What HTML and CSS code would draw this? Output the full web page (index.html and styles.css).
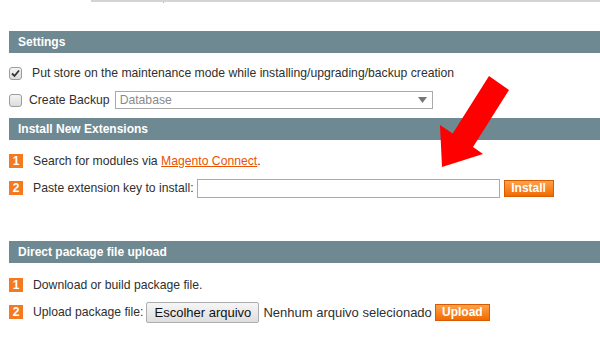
FILE: index.html
```html
<!DOCTYPE html>
<html lang="en">
<head>
    <meta charset="UTF-8">
    <title>Magento Connect Manager</title>
    <link rel="stylesheet" href="styles.css">
</head>
<body>
    <div class="tab-strip"><div class="tab"></div></div>

    <div class="page">
        <div class="section-head">Settings</div>
        <div class="section-body settings">
            <div class="row">
                <input type="checkbox" class="check" checked>
                <label class="check-label">Put store on the maintenance mode while installing/upgrading/backup creation</label>
            </div>
            <div class="row">
                <input type="checkbox" class="check">
                <label class="check-label tight">Create Backup</label>
                <select class="backup-type">
                    <option>Database</option>
                </select>
            </div>
        </div>

        <div class="section-head">Install New Extensions</div>
        <div class="section-body install">
            <div class="row">
                <span class="step">1</span>
                <span>Search for modules via <a href="#" class="link">Magento Connect</a>.</span>
            </div>
            <div class="row">
                <span class="step">2</span>
                <span>Paste extension key to install:</span>
                <input type="text" class="key-input">
                <button class="orange-btn install-btn">Install</button>
            </div>
        </div>

        <div class="section-head">Direct package file upload</div>
        <div class="section-body upload">
            <div class="row">
                <span class="step">1</span>
                <span>Download or build package file.</span>
            </div>
            <div class="row">
                <span class="step">2</span>
                <span>Upload package file:</span>
                <button class="file-btn">Escolher arquivo</button>
                <span class="file-name">Nenhum arquivo selecionado</span>
                <button class="orange-btn upload-btn">Upload</button>
            </div>
        </div>

        <!-- red callout arrow drawn over the screenshot -->
        <svg class="arrow" width="80" height="100" viewBox="430 65 80 100">
            <polygon points="489,74 509,88 473,145 483,152 442,165 440,123 452.7,131.5" fill="#ff0000"/>
        </svg>
    </div>
</body>
</html>
```

FILE: styles.css
```css
body {
    margin: 0;
    font-family: "Liberation Sans", Arial, sans-serif;
    font-size: 12px;
    color: #2f2f2f;
    background: #fff;
}
.tab-strip {
    margin-left: 91px;
    border-top: 2px solid #d4d4d4;
    height: 0;
}
.tab {
    width: 72px;
    height: 1px;
    border-right: 1px solid #b5b5b5;
}
.page {
    position: relative;
    padding: 29px 0 0 9px;
}
.section-head {
    height: 22px;
    line-height: 22px;
    padding-left: 9px;
    background: #6f8992;
    color: #fff;
    font-weight: bold;
}
.section-body {
    display: flex;
    flex-direction: column;
    gap: 5px;
    font-size: 12.2px;
}
.settings {
    padding: 9px 0 7px;
}
.install {
    padding: 10px 0 42px;
}
.upload {
    padding: 11px 0 0;
}
.row {
    display: flex;
    align-items: center;
    height: 22px;
}
.check {
    appearance: none;
    width: 13px;
    height: 13px;
    margin: 0 10px 0 0;
    border: 1px solid #9c9c9c;
    border-radius: 3px;
    background: linear-gradient(#f4f4f4, #dcdcdc);
}
.check:checked {
    background: url("data:image/svg+xml;utf8,<svg xmlns='http://www.w3.org/2000/svg' width='11' height='11'><path d='M2 5.5 L4.5 8 L9 2.5' fill='none' stroke='%23333' stroke-width='1.8'/></svg>") center no-repeat, linear-gradient(#f4f4f4, #dcdcdc);
}
.check-label.tight {
    margin-left: -3px;
}
.backup-type {
    appearance: none;
    margin-left: 5px;
    width: 318px;
    height: 18px;
    padding: 0 4px;
    border: 1px solid #aaa;
    border-radius: 0;
    font-family: inherit;
    font-size: 12.2px;
    color: #8a8a8a;
    background: #fff url("data:image/svg+xml;utf8,<svg xmlns='http://www.w3.org/2000/svg' width='9' height='6'><path d='M0 0 H9 L4.5 6 Z' fill='%23777'/></svg>") right 5px center no-repeat;
}
.step {
    width: 14px;
    height: 14px;
    line-height: 14px;
    margin-right: 10px;
    background: #f47920;
    color: #fff;
    font-size: 12px;
    font-weight: bold;
    text-align: center;
}
.link {
    color: #eb5202;
}
.key-input {
    width: 303px;
    height: 19px;
    box-sizing: border-box;
    margin: 0 0 0 3px;
    border: 1px solid #aaa;
    padding: 0 3px;
}
.orange-btn {
    height: 17px;
    padding: 0;
    border: 1px solid #d95a00;
    background: linear-gradient(#ffa24a, #f16a00);
    color: #fff;
    font-family: inherit;
    font-size: 12px;
    font-weight: bold;
    cursor: pointer;
}
.install-btn {
    width: 50px;
    margin-left: 4px;
}
.file-btn {
    width: 113px;
    height: 21px;
    margin-left: 3px;
    padding: 0;
    border: 1px solid #adadad;
    border-radius: 2px;
    background: linear-gradient(#f6f6f6, #dedede);
    color: #111;
    font-family: inherit;
    font-size: 13px;
}
.file-name {
    margin-left: 4px;
    font-size: 13px;
}
.upload-btn {
    width: 55px;
    margin-left: 3px;
}
.arrow {
    position: absolute;
    left: 430px;
    top: 65px;
}
```
